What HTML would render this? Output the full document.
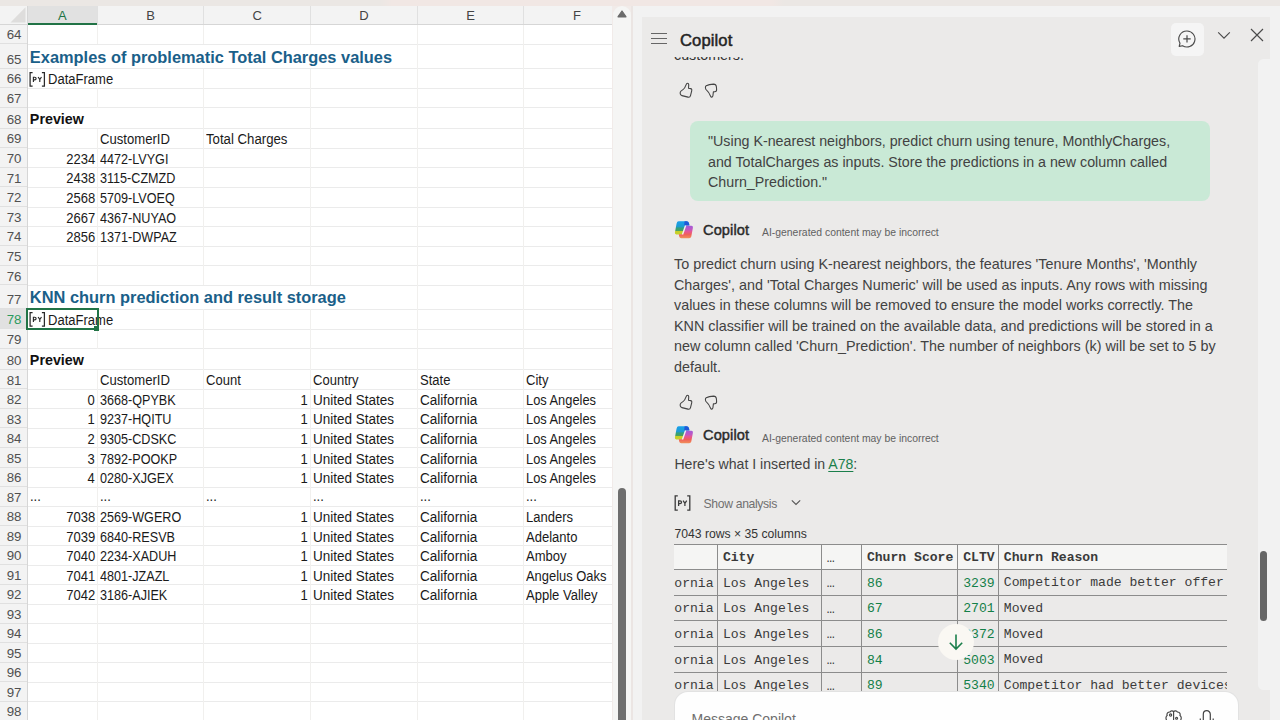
<!DOCTYPE html>
<html><head><meta charset="utf-8"><title>Excel Copilot</title>
<style>
html,body{margin:0;padding:0;width:1280px;height:720px;overflow:hidden;background:#f2f2f2;}
body{position:relative;font-family:'Liberation Sans', sans-serif;}
.r{position:absolute;box-sizing:border-box;}
.t{position:absolute;white-space:nowrap;line-height:1;}
</style></head><body>
<div class="r" style="left:0;top:0;width:1280px;height:5.5px;background:linear-gradient(90deg,#ebe7e4 0px,#ebe7e4 380px,#f1e7e4 392px,#f1e7e4 772px,#ebe7e4 784px,#ebe7e4 1280px)"></div>
<div class="r" style="left:0.00px;top:5.50px;width:612.00px;height:714.50px;background:#ffffff;"></div>
<div class="r" style="left:27.25px;top:43.50px;width:584.75px;height:1.00px;background:#ebebeb;"></div>
<div class="r" style="left:27.25px;top:68.00px;width:584.75px;height:1.00px;background:#ebebeb;"></div>
<div class="r" style="left:27.25px;top:87.50px;width:584.75px;height:1.00px;background:#ebebeb;"></div>
<div class="r" style="left:27.25px;top:107.00px;width:584.75px;height:1.00px;background:#ebebeb;"></div>
<div class="r" style="left:27.25px;top:128.25px;width:584.75px;height:1.00px;background:#ebebeb;"></div>
<div class="r" style="left:27.25px;top:147.50px;width:584.75px;height:1.00px;background:#ebebeb;"></div>
<div class="r" style="left:27.25px;top:167.00px;width:584.75px;height:1.00px;background:#ebebeb;"></div>
<div class="r" style="left:27.25px;top:186.75px;width:584.75px;height:1.00px;background:#ebebeb;"></div>
<div class="r" style="left:27.25px;top:206.50px;width:584.75px;height:1.00px;background:#ebebeb;"></div>
<div class="r" style="left:27.25px;top:226.00px;width:584.75px;height:1.00px;background:#ebebeb;"></div>
<div class="r" style="left:27.25px;top:245.50px;width:584.75px;height:1.00px;background:#ebebeb;"></div>
<div class="r" style="left:27.25px;top:265.00px;width:584.75px;height:1.00px;background:#ebebeb;"></div>
<div class="r" style="left:27.25px;top:284.75px;width:584.75px;height:1.00px;background:#ebebeb;"></div>
<div class="r" style="left:27.25px;top:308.50px;width:584.75px;height:1.00px;background:#ebebeb;"></div>
<div class="r" style="left:27.25px;top:328.50px;width:584.75px;height:1.00px;background:#ebebeb;"></div>
<div class="r" style="left:27.25px;top:348.00px;width:584.75px;height:1.00px;background:#ebebeb;"></div>
<div class="r" style="left:27.25px;top:369.00px;width:584.75px;height:1.00px;background:#ebebeb;"></div>
<div class="r" style="left:27.25px;top:388.75px;width:584.75px;height:1.00px;background:#ebebeb;"></div>
<div class="r" style="left:27.25px;top:408.25px;width:584.75px;height:1.00px;background:#ebebeb;"></div>
<div class="r" style="left:27.25px;top:427.75px;width:584.75px;height:1.00px;background:#ebebeb;"></div>
<div class="r" style="left:27.25px;top:447.25px;width:584.75px;height:1.00px;background:#ebebeb;"></div>
<div class="r" style="left:27.25px;top:467.00px;width:584.75px;height:1.00px;background:#ebebeb;"></div>
<div class="r" style="left:27.25px;top:486.50px;width:584.75px;height:1.00px;background:#ebebeb;"></div>
<div class="r" style="left:27.25px;top:506.00px;width:584.75px;height:1.00px;background:#ebebeb;"></div>
<div class="r" style="left:27.25px;top:525.50px;width:584.75px;height:1.00px;background:#ebebeb;"></div>
<div class="r" style="left:27.25px;top:545.00px;width:584.75px;height:1.00px;background:#ebebeb;"></div>
<div class="r" style="left:27.25px;top:564.50px;width:584.75px;height:1.00px;background:#ebebeb;"></div>
<div class="r" style="left:27.25px;top:584.00px;width:584.75px;height:1.00px;background:#ebebeb;"></div>
<div class="r" style="left:27.25px;top:603.50px;width:584.75px;height:1.00px;background:#ebebeb;"></div>
<div class="r" style="left:27.25px;top:623.00px;width:584.75px;height:1.00px;background:#ebebeb;"></div>
<div class="r" style="left:27.25px;top:642.50px;width:584.75px;height:1.00px;background:#ebebeb;"></div>
<div class="r" style="left:27.25px;top:662.00px;width:584.75px;height:1.00px;background:#ebebeb;"></div>
<div class="r" style="left:27.25px;top:681.50px;width:584.75px;height:1.00px;background:#ebebeb;"></div>
<div class="r" style="left:27.25px;top:701.00px;width:584.75px;height:1.00px;background:#ebebeb;"></div>
<div class="r" style="left:27.25px;top:720.50px;width:584.75px;height:1.00px;background:#ebebeb;"></div>
<div class="r" style="left:96.75px;top:24.00px;width:1.00px;height:20.00px;background:#f1f0ee;"></div>
<div class="r" style="left:203.25px;top:24.00px;width:1.00px;height:20.00px;background:#f1f0ee;"></div>
<div class="r" style="left:310.00px;top:24.00px;width:1.00px;height:20.00px;background:#f1f0ee;"></div>
<div class="r" style="left:417.00px;top:24.00px;width:1.00px;height:20.00px;background:#f1f0ee;"></div>
<div class="r" style="left:523.25px;top:24.00px;width:1.00px;height:20.00px;background:#f1f0ee;"></div>
<div class="r" style="left:417.00px;top:44.00px;width:1.00px;height:24.50px;background:#f1f0ee;"></div>
<div class="r" style="left:523.25px;top:44.00px;width:1.00px;height:24.50px;background:#f1f0ee;"></div>
<div class="r" style="left:203.25px;top:68.50px;width:1.00px;height:19.50px;background:#f1f0ee;"></div>
<div class="r" style="left:310.00px;top:68.50px;width:1.00px;height:19.50px;background:#f1f0ee;"></div>
<div class="r" style="left:417.00px;top:68.50px;width:1.00px;height:19.50px;background:#f1f0ee;"></div>
<div class="r" style="left:523.25px;top:68.50px;width:1.00px;height:19.50px;background:#f1f0ee;"></div>
<div class="r" style="left:96.75px;top:88.00px;width:1.00px;height:19.50px;background:#f1f0ee;"></div>
<div class="r" style="left:203.25px;top:88.00px;width:1.00px;height:19.50px;background:#f1f0ee;"></div>
<div class="r" style="left:310.00px;top:88.00px;width:1.00px;height:19.50px;background:#f1f0ee;"></div>
<div class="r" style="left:417.00px;top:88.00px;width:1.00px;height:19.50px;background:#f1f0ee;"></div>
<div class="r" style="left:523.25px;top:88.00px;width:1.00px;height:19.50px;background:#f1f0ee;"></div>
<div class="r" style="left:203.25px;top:107.50px;width:1.00px;height:21.25px;background:#f1f0ee;"></div>
<div class="r" style="left:310.00px;top:107.50px;width:1.00px;height:21.25px;background:#f1f0ee;"></div>
<div class="r" style="left:417.00px;top:107.50px;width:1.00px;height:21.25px;background:#f1f0ee;"></div>
<div class="r" style="left:523.25px;top:107.50px;width:1.00px;height:21.25px;background:#f1f0ee;"></div>
<div class="r" style="left:96.75px;top:128.75px;width:1.00px;height:19.25px;background:#f1f0ee;"></div>
<div class="r" style="left:203.25px;top:128.75px;width:1.00px;height:19.25px;background:#f1f0ee;"></div>
<div class="r" style="left:310.00px;top:128.75px;width:1.00px;height:19.25px;background:#f1f0ee;"></div>
<div class="r" style="left:417.00px;top:128.75px;width:1.00px;height:19.25px;background:#f1f0ee;"></div>
<div class="r" style="left:523.25px;top:128.75px;width:1.00px;height:19.25px;background:#f1f0ee;"></div>
<div class="r" style="left:96.75px;top:148.00px;width:1.00px;height:19.50px;background:#f1f0ee;"></div>
<div class="r" style="left:203.25px;top:148.00px;width:1.00px;height:19.50px;background:#f1f0ee;"></div>
<div class="r" style="left:310.00px;top:148.00px;width:1.00px;height:19.50px;background:#f1f0ee;"></div>
<div class="r" style="left:417.00px;top:148.00px;width:1.00px;height:19.50px;background:#f1f0ee;"></div>
<div class="r" style="left:523.25px;top:148.00px;width:1.00px;height:19.50px;background:#f1f0ee;"></div>
<div class="r" style="left:96.75px;top:167.50px;width:1.00px;height:19.75px;background:#f1f0ee;"></div>
<div class="r" style="left:203.25px;top:167.50px;width:1.00px;height:19.75px;background:#f1f0ee;"></div>
<div class="r" style="left:310.00px;top:167.50px;width:1.00px;height:19.75px;background:#f1f0ee;"></div>
<div class="r" style="left:417.00px;top:167.50px;width:1.00px;height:19.75px;background:#f1f0ee;"></div>
<div class="r" style="left:523.25px;top:167.50px;width:1.00px;height:19.75px;background:#f1f0ee;"></div>
<div class="r" style="left:96.75px;top:187.25px;width:1.00px;height:19.75px;background:#f1f0ee;"></div>
<div class="r" style="left:203.25px;top:187.25px;width:1.00px;height:19.75px;background:#f1f0ee;"></div>
<div class="r" style="left:310.00px;top:187.25px;width:1.00px;height:19.75px;background:#f1f0ee;"></div>
<div class="r" style="left:417.00px;top:187.25px;width:1.00px;height:19.75px;background:#f1f0ee;"></div>
<div class="r" style="left:523.25px;top:187.25px;width:1.00px;height:19.75px;background:#f1f0ee;"></div>
<div class="r" style="left:96.75px;top:207.00px;width:1.00px;height:19.50px;background:#f1f0ee;"></div>
<div class="r" style="left:203.25px;top:207.00px;width:1.00px;height:19.50px;background:#f1f0ee;"></div>
<div class="r" style="left:310.00px;top:207.00px;width:1.00px;height:19.50px;background:#f1f0ee;"></div>
<div class="r" style="left:417.00px;top:207.00px;width:1.00px;height:19.50px;background:#f1f0ee;"></div>
<div class="r" style="left:523.25px;top:207.00px;width:1.00px;height:19.50px;background:#f1f0ee;"></div>
<div class="r" style="left:96.75px;top:226.50px;width:1.00px;height:19.50px;background:#f1f0ee;"></div>
<div class="r" style="left:203.25px;top:226.50px;width:1.00px;height:19.50px;background:#f1f0ee;"></div>
<div class="r" style="left:310.00px;top:226.50px;width:1.00px;height:19.50px;background:#f1f0ee;"></div>
<div class="r" style="left:417.00px;top:226.50px;width:1.00px;height:19.50px;background:#f1f0ee;"></div>
<div class="r" style="left:523.25px;top:226.50px;width:1.00px;height:19.50px;background:#f1f0ee;"></div>
<div class="r" style="left:96.75px;top:246.00px;width:1.00px;height:19.50px;background:#f1f0ee;"></div>
<div class="r" style="left:203.25px;top:246.00px;width:1.00px;height:19.50px;background:#f1f0ee;"></div>
<div class="r" style="left:310.00px;top:246.00px;width:1.00px;height:19.50px;background:#f1f0ee;"></div>
<div class="r" style="left:417.00px;top:246.00px;width:1.00px;height:19.50px;background:#f1f0ee;"></div>
<div class="r" style="left:523.25px;top:246.00px;width:1.00px;height:19.50px;background:#f1f0ee;"></div>
<div class="r" style="left:96.75px;top:265.50px;width:1.00px;height:19.75px;background:#f1f0ee;"></div>
<div class="r" style="left:203.25px;top:265.50px;width:1.00px;height:19.75px;background:#f1f0ee;"></div>
<div class="r" style="left:310.00px;top:265.50px;width:1.00px;height:19.75px;background:#f1f0ee;"></div>
<div class="r" style="left:417.00px;top:265.50px;width:1.00px;height:19.75px;background:#f1f0ee;"></div>
<div class="r" style="left:523.25px;top:265.50px;width:1.00px;height:19.75px;background:#f1f0ee;"></div>
<div class="r" style="left:417.00px;top:285.25px;width:1.00px;height:23.75px;background:#f1f0ee;"></div>
<div class="r" style="left:523.25px;top:285.25px;width:1.00px;height:23.75px;background:#f1f0ee;"></div>
<div class="r" style="left:203.25px;top:309.00px;width:1.00px;height:20.00px;background:#f1f0ee;"></div>
<div class="r" style="left:310.00px;top:309.00px;width:1.00px;height:20.00px;background:#f1f0ee;"></div>
<div class="r" style="left:417.00px;top:309.00px;width:1.00px;height:20.00px;background:#f1f0ee;"></div>
<div class="r" style="left:523.25px;top:309.00px;width:1.00px;height:20.00px;background:#f1f0ee;"></div>
<div class="r" style="left:96.75px;top:329.00px;width:1.00px;height:19.50px;background:#f1f0ee;"></div>
<div class="r" style="left:203.25px;top:329.00px;width:1.00px;height:19.50px;background:#f1f0ee;"></div>
<div class="r" style="left:310.00px;top:329.00px;width:1.00px;height:19.50px;background:#f1f0ee;"></div>
<div class="r" style="left:417.00px;top:329.00px;width:1.00px;height:19.50px;background:#f1f0ee;"></div>
<div class="r" style="left:523.25px;top:329.00px;width:1.00px;height:19.50px;background:#f1f0ee;"></div>
<div class="r" style="left:203.25px;top:348.50px;width:1.00px;height:21.00px;background:#f1f0ee;"></div>
<div class="r" style="left:310.00px;top:348.50px;width:1.00px;height:21.00px;background:#f1f0ee;"></div>
<div class="r" style="left:417.00px;top:348.50px;width:1.00px;height:21.00px;background:#f1f0ee;"></div>
<div class="r" style="left:523.25px;top:348.50px;width:1.00px;height:21.00px;background:#f1f0ee;"></div>
<div class="r" style="left:96.75px;top:369.50px;width:1.00px;height:19.75px;background:#f1f0ee;"></div>
<div class="r" style="left:203.25px;top:369.50px;width:1.00px;height:19.75px;background:#f1f0ee;"></div>
<div class="r" style="left:310.00px;top:369.50px;width:1.00px;height:19.75px;background:#f1f0ee;"></div>
<div class="r" style="left:417.00px;top:369.50px;width:1.00px;height:19.75px;background:#f1f0ee;"></div>
<div class="r" style="left:523.25px;top:369.50px;width:1.00px;height:19.75px;background:#f1f0ee;"></div>
<div class="r" style="left:96.75px;top:389.25px;width:1.00px;height:19.50px;background:#f1f0ee;"></div>
<div class="r" style="left:203.25px;top:389.25px;width:1.00px;height:19.50px;background:#f1f0ee;"></div>
<div class="r" style="left:310.00px;top:389.25px;width:1.00px;height:19.50px;background:#f1f0ee;"></div>
<div class="r" style="left:417.00px;top:389.25px;width:1.00px;height:19.50px;background:#f1f0ee;"></div>
<div class="r" style="left:523.25px;top:389.25px;width:1.00px;height:19.50px;background:#f1f0ee;"></div>
<div class="r" style="left:96.75px;top:408.75px;width:1.00px;height:19.50px;background:#f1f0ee;"></div>
<div class="r" style="left:203.25px;top:408.75px;width:1.00px;height:19.50px;background:#f1f0ee;"></div>
<div class="r" style="left:310.00px;top:408.75px;width:1.00px;height:19.50px;background:#f1f0ee;"></div>
<div class="r" style="left:417.00px;top:408.75px;width:1.00px;height:19.50px;background:#f1f0ee;"></div>
<div class="r" style="left:523.25px;top:408.75px;width:1.00px;height:19.50px;background:#f1f0ee;"></div>
<div class="r" style="left:96.75px;top:428.25px;width:1.00px;height:19.50px;background:#f1f0ee;"></div>
<div class="r" style="left:203.25px;top:428.25px;width:1.00px;height:19.50px;background:#f1f0ee;"></div>
<div class="r" style="left:310.00px;top:428.25px;width:1.00px;height:19.50px;background:#f1f0ee;"></div>
<div class="r" style="left:417.00px;top:428.25px;width:1.00px;height:19.50px;background:#f1f0ee;"></div>
<div class="r" style="left:523.25px;top:428.25px;width:1.00px;height:19.50px;background:#f1f0ee;"></div>
<div class="r" style="left:96.75px;top:447.75px;width:1.00px;height:19.75px;background:#f1f0ee;"></div>
<div class="r" style="left:203.25px;top:447.75px;width:1.00px;height:19.75px;background:#f1f0ee;"></div>
<div class="r" style="left:310.00px;top:447.75px;width:1.00px;height:19.75px;background:#f1f0ee;"></div>
<div class="r" style="left:417.00px;top:447.75px;width:1.00px;height:19.75px;background:#f1f0ee;"></div>
<div class="r" style="left:523.25px;top:447.75px;width:1.00px;height:19.75px;background:#f1f0ee;"></div>
<div class="r" style="left:96.75px;top:467.50px;width:1.00px;height:19.50px;background:#f1f0ee;"></div>
<div class="r" style="left:203.25px;top:467.50px;width:1.00px;height:19.50px;background:#f1f0ee;"></div>
<div class="r" style="left:310.00px;top:467.50px;width:1.00px;height:19.50px;background:#f1f0ee;"></div>
<div class="r" style="left:417.00px;top:467.50px;width:1.00px;height:19.50px;background:#f1f0ee;"></div>
<div class="r" style="left:523.25px;top:467.50px;width:1.00px;height:19.50px;background:#f1f0ee;"></div>
<div class="r" style="left:96.75px;top:487.00px;width:1.00px;height:19.50px;background:#f1f0ee;"></div>
<div class="r" style="left:203.25px;top:487.00px;width:1.00px;height:19.50px;background:#f1f0ee;"></div>
<div class="r" style="left:310.00px;top:487.00px;width:1.00px;height:19.50px;background:#f1f0ee;"></div>
<div class="r" style="left:417.00px;top:487.00px;width:1.00px;height:19.50px;background:#f1f0ee;"></div>
<div class="r" style="left:523.25px;top:487.00px;width:1.00px;height:19.50px;background:#f1f0ee;"></div>
<div class="r" style="left:96.75px;top:506.50px;width:1.00px;height:19.50px;background:#f1f0ee;"></div>
<div class="r" style="left:203.25px;top:506.50px;width:1.00px;height:19.50px;background:#f1f0ee;"></div>
<div class="r" style="left:310.00px;top:506.50px;width:1.00px;height:19.50px;background:#f1f0ee;"></div>
<div class="r" style="left:417.00px;top:506.50px;width:1.00px;height:19.50px;background:#f1f0ee;"></div>
<div class="r" style="left:523.25px;top:506.50px;width:1.00px;height:19.50px;background:#f1f0ee;"></div>
<div class="r" style="left:96.75px;top:526.00px;width:1.00px;height:19.50px;background:#f1f0ee;"></div>
<div class="r" style="left:203.25px;top:526.00px;width:1.00px;height:19.50px;background:#f1f0ee;"></div>
<div class="r" style="left:310.00px;top:526.00px;width:1.00px;height:19.50px;background:#f1f0ee;"></div>
<div class="r" style="left:417.00px;top:526.00px;width:1.00px;height:19.50px;background:#f1f0ee;"></div>
<div class="r" style="left:523.25px;top:526.00px;width:1.00px;height:19.50px;background:#f1f0ee;"></div>
<div class="r" style="left:96.75px;top:545.50px;width:1.00px;height:19.50px;background:#f1f0ee;"></div>
<div class="r" style="left:203.25px;top:545.50px;width:1.00px;height:19.50px;background:#f1f0ee;"></div>
<div class="r" style="left:310.00px;top:545.50px;width:1.00px;height:19.50px;background:#f1f0ee;"></div>
<div class="r" style="left:417.00px;top:545.50px;width:1.00px;height:19.50px;background:#f1f0ee;"></div>
<div class="r" style="left:523.25px;top:545.50px;width:1.00px;height:19.50px;background:#f1f0ee;"></div>
<div class="r" style="left:96.75px;top:565.00px;width:1.00px;height:19.50px;background:#f1f0ee;"></div>
<div class="r" style="left:203.25px;top:565.00px;width:1.00px;height:19.50px;background:#f1f0ee;"></div>
<div class="r" style="left:310.00px;top:565.00px;width:1.00px;height:19.50px;background:#f1f0ee;"></div>
<div class="r" style="left:417.00px;top:565.00px;width:1.00px;height:19.50px;background:#f1f0ee;"></div>
<div class="r" style="left:523.25px;top:565.00px;width:1.00px;height:19.50px;background:#f1f0ee;"></div>
<div class="r" style="left:96.75px;top:584.50px;width:1.00px;height:19.50px;background:#f1f0ee;"></div>
<div class="r" style="left:203.25px;top:584.50px;width:1.00px;height:19.50px;background:#f1f0ee;"></div>
<div class="r" style="left:310.00px;top:584.50px;width:1.00px;height:19.50px;background:#f1f0ee;"></div>
<div class="r" style="left:417.00px;top:584.50px;width:1.00px;height:19.50px;background:#f1f0ee;"></div>
<div class="r" style="left:523.25px;top:584.50px;width:1.00px;height:19.50px;background:#f1f0ee;"></div>
<div class="r" style="left:96.75px;top:604.00px;width:1.00px;height:19.50px;background:#f1f0ee;"></div>
<div class="r" style="left:203.25px;top:604.00px;width:1.00px;height:19.50px;background:#f1f0ee;"></div>
<div class="r" style="left:310.00px;top:604.00px;width:1.00px;height:19.50px;background:#f1f0ee;"></div>
<div class="r" style="left:417.00px;top:604.00px;width:1.00px;height:19.50px;background:#f1f0ee;"></div>
<div class="r" style="left:523.25px;top:604.00px;width:1.00px;height:19.50px;background:#f1f0ee;"></div>
<div class="r" style="left:96.75px;top:623.50px;width:1.00px;height:19.50px;background:#f1f0ee;"></div>
<div class="r" style="left:203.25px;top:623.50px;width:1.00px;height:19.50px;background:#f1f0ee;"></div>
<div class="r" style="left:310.00px;top:623.50px;width:1.00px;height:19.50px;background:#f1f0ee;"></div>
<div class="r" style="left:417.00px;top:623.50px;width:1.00px;height:19.50px;background:#f1f0ee;"></div>
<div class="r" style="left:523.25px;top:623.50px;width:1.00px;height:19.50px;background:#f1f0ee;"></div>
<div class="r" style="left:96.75px;top:643.00px;width:1.00px;height:19.50px;background:#f1f0ee;"></div>
<div class="r" style="left:203.25px;top:643.00px;width:1.00px;height:19.50px;background:#f1f0ee;"></div>
<div class="r" style="left:310.00px;top:643.00px;width:1.00px;height:19.50px;background:#f1f0ee;"></div>
<div class="r" style="left:417.00px;top:643.00px;width:1.00px;height:19.50px;background:#f1f0ee;"></div>
<div class="r" style="left:523.25px;top:643.00px;width:1.00px;height:19.50px;background:#f1f0ee;"></div>
<div class="r" style="left:96.75px;top:662.50px;width:1.00px;height:19.50px;background:#f1f0ee;"></div>
<div class="r" style="left:203.25px;top:662.50px;width:1.00px;height:19.50px;background:#f1f0ee;"></div>
<div class="r" style="left:310.00px;top:662.50px;width:1.00px;height:19.50px;background:#f1f0ee;"></div>
<div class="r" style="left:417.00px;top:662.50px;width:1.00px;height:19.50px;background:#f1f0ee;"></div>
<div class="r" style="left:523.25px;top:662.50px;width:1.00px;height:19.50px;background:#f1f0ee;"></div>
<div class="r" style="left:96.75px;top:682.00px;width:1.00px;height:19.50px;background:#f1f0ee;"></div>
<div class="r" style="left:203.25px;top:682.00px;width:1.00px;height:19.50px;background:#f1f0ee;"></div>
<div class="r" style="left:310.00px;top:682.00px;width:1.00px;height:19.50px;background:#f1f0ee;"></div>
<div class="r" style="left:417.00px;top:682.00px;width:1.00px;height:19.50px;background:#f1f0ee;"></div>
<div class="r" style="left:523.25px;top:682.00px;width:1.00px;height:19.50px;background:#f1f0ee;"></div>
<div class="r" style="left:96.75px;top:701.50px;width:1.00px;height:19.50px;background:#f1f0ee;"></div>
<div class="r" style="left:203.25px;top:701.50px;width:1.00px;height:19.50px;background:#f1f0ee;"></div>
<div class="r" style="left:310.00px;top:701.50px;width:1.00px;height:19.50px;background:#f1f0ee;"></div>
<div class="r" style="left:417.00px;top:701.50px;width:1.00px;height:19.50px;background:#f1f0ee;"></div>
<div class="r" style="left:523.25px;top:701.50px;width:1.00px;height:19.50px;background:#f1f0ee;"></div>
<div class="r" style="left:0.00px;top:5.50px;width:612.00px;height:18.50px;background:#f3f3f3;"></div>
<div class="r" style="left:27.25px;top:5.50px;width:70.00px;height:18.50px;background:#e1e1e1;"></div>
<div class="r" style="left:0.00px;top:23.50px;width:612.00px;height:1.00px;background:#d6d6d6;"></div>
<div class="r" style="left:27.25px;top:22.75px;width:70.00px;height:2.00px;background:#217346;"></div>
<div class="r" style="left:96.75px;top:5.50px;width:1.00px;height:18.00px;background:#e0e0e0;"></div>
<div class="r" style="left:203.25px;top:5.50px;width:1.00px;height:18.00px;background:#e0e0e0;"></div>
<div class="r" style="left:310.00px;top:5.50px;width:1.00px;height:18.00px;background:#e0e0e0;"></div>
<div class="r" style="left:417.00px;top:5.50px;width:1.00px;height:18.00px;background:#e0e0e0;"></div>
<div class="r" style="left:523.25px;top:5.50px;width:1.00px;height:18.00px;background:#e0e0e0;"></div>
<svg class="r" style="left:0;top:5.5px" width="27" height="19"><polygon points="10.5,16.5 25.5,1.2 25.5,16.5" fill="#dedddc"/></svg>
<div class="t" style="left:42.25px;width:40px;text-align:center;top:8.75px;font-size:13px;color:#217346">A</div>
<div class="t" style="left:130.50px;width:40px;text-align:center;top:8.75px;font-size:13px;color:#444">B</div>
<div class="t" style="left:237.12px;width:40px;text-align:center;top:8.75px;font-size:13px;color:#444">C</div>
<div class="t" style="left:344.00px;width:40px;text-align:center;top:8.75px;font-size:13px;color:#444">D</div>
<div class="t" style="left:450.62px;width:40px;text-align:center;top:8.75px;font-size:13px;color:#444">E</div>
<div class="t" style="left:557.00px;width:40px;text-align:center;top:8.75px;font-size:13px;color:#444">F</div>
<div class="r" style="left:0.00px;top:24.50px;width:27.25px;height:695.50px;background:#f3f3f3;"></div>
<div class="r" style="left:26.50px;top:5.50px;width:1.00px;height:714.50px;background:#d6d6d6;"></div>
<div class="r" style="left:0.00px;top:43.00px;width:26.50px;height:1.00px;background:#e0e0e0;"></div>
<div class="r" style="left:0.00px;top:67.50px;width:26.50px;height:1.00px;background:#e0e0e0;"></div>
<div class="r" style="left:0.00px;top:87.00px;width:26.50px;height:1.00px;background:#e0e0e0;"></div>
<div class="r" style="left:0.00px;top:106.50px;width:26.50px;height:1.00px;background:#e0e0e0;"></div>
<div class="r" style="left:0.00px;top:127.75px;width:26.50px;height:1.00px;background:#e0e0e0;"></div>
<div class="r" style="left:0.00px;top:147.00px;width:26.50px;height:1.00px;background:#e0e0e0;"></div>
<div class="r" style="left:0.00px;top:166.50px;width:26.50px;height:1.00px;background:#e0e0e0;"></div>
<div class="r" style="left:0.00px;top:186.25px;width:26.50px;height:1.00px;background:#e0e0e0;"></div>
<div class="r" style="left:0.00px;top:206.00px;width:26.50px;height:1.00px;background:#e0e0e0;"></div>
<div class="r" style="left:0.00px;top:225.50px;width:26.50px;height:1.00px;background:#e0e0e0;"></div>
<div class="r" style="left:0.00px;top:245.00px;width:26.50px;height:1.00px;background:#e0e0e0;"></div>
<div class="r" style="left:0.00px;top:264.50px;width:26.50px;height:1.00px;background:#e0e0e0;"></div>
<div class="r" style="left:0.00px;top:284.25px;width:26.50px;height:1.00px;background:#e0e0e0;"></div>
<div class="r" style="left:0.00px;top:308.00px;width:26.50px;height:1.00px;background:#e0e0e0;"></div>
<div class="r" style="left:0.00px;top:328.00px;width:26.50px;height:1.00px;background:#e0e0e0;"></div>
<div class="r" style="left:0.00px;top:347.50px;width:26.50px;height:1.00px;background:#e0e0e0;"></div>
<div class="r" style="left:0.00px;top:368.50px;width:26.50px;height:1.00px;background:#e0e0e0;"></div>
<div class="r" style="left:0.00px;top:388.25px;width:26.50px;height:1.00px;background:#e0e0e0;"></div>
<div class="r" style="left:0.00px;top:407.75px;width:26.50px;height:1.00px;background:#e0e0e0;"></div>
<div class="r" style="left:0.00px;top:427.25px;width:26.50px;height:1.00px;background:#e0e0e0;"></div>
<div class="r" style="left:0.00px;top:446.75px;width:26.50px;height:1.00px;background:#e0e0e0;"></div>
<div class="r" style="left:0.00px;top:466.50px;width:26.50px;height:1.00px;background:#e0e0e0;"></div>
<div class="r" style="left:0.00px;top:486.00px;width:26.50px;height:1.00px;background:#e0e0e0;"></div>
<div class="r" style="left:0.00px;top:505.50px;width:26.50px;height:1.00px;background:#e0e0e0;"></div>
<div class="r" style="left:0.00px;top:525.00px;width:26.50px;height:1.00px;background:#e0e0e0;"></div>
<div class="r" style="left:0.00px;top:544.50px;width:26.50px;height:1.00px;background:#e0e0e0;"></div>
<div class="r" style="left:0.00px;top:564.00px;width:26.50px;height:1.00px;background:#e0e0e0;"></div>
<div class="r" style="left:0.00px;top:583.50px;width:26.50px;height:1.00px;background:#e0e0e0;"></div>
<div class="r" style="left:0.00px;top:603.00px;width:26.50px;height:1.00px;background:#e0e0e0;"></div>
<div class="r" style="left:0.00px;top:622.50px;width:26.50px;height:1.00px;background:#e0e0e0;"></div>
<div class="r" style="left:0.00px;top:642.00px;width:26.50px;height:1.00px;background:#e0e0e0;"></div>
<div class="r" style="left:0.00px;top:661.50px;width:26.50px;height:1.00px;background:#e0e0e0;"></div>
<div class="r" style="left:0.00px;top:681.00px;width:26.50px;height:1.00px;background:#e0e0e0;"></div>
<div class="r" style="left:0.00px;top:700.50px;width:26.50px;height:1.00px;background:#e0e0e0;"></div>
<div class="r" style="left:0.00px;top:720.00px;width:26.50px;height:1.00px;background:#e0e0e0;"></div>
<div class="r" style="left:0.00px;top:309.00px;width:26.50px;height:19.00px;background:#e1e1e1;"></div>
<div class="t" style="right:1258.50px;top:28.40px;font-size:13.3px;color:#505050">64</div>
<div class="t" style="right:1258.50px;top:52.90px;font-size:13.3px;color:#505050">65</div>
<div class="t" style="right:1258.50px;top:72.40px;font-size:13.3px;color:#505050">66</div>
<div class="t" style="right:1258.50px;top:91.90px;font-size:13.3px;color:#505050">67</div>
<div class="t" style="right:1258.50px;top:113.15px;font-size:13.3px;color:#505050">68</div>
<div class="t" style="right:1258.50px;top:132.39px;font-size:13.3px;color:#505050">69</div>
<div class="t" style="right:1258.50px;top:151.89px;font-size:13.3px;color:#505050">70</div>
<div class="t" style="right:1258.50px;top:171.64px;font-size:13.3px;color:#505050">71</div>
<div class="t" style="right:1258.50px;top:191.39px;font-size:13.3px;color:#505050">72</div>
<div class="t" style="right:1258.50px;top:210.89px;font-size:13.3px;color:#505050">73</div>
<div class="t" style="right:1258.50px;top:230.39px;font-size:13.3px;color:#505050">74</div>
<div class="t" style="right:1258.50px;top:249.89px;font-size:13.3px;color:#505050">75</div>
<div class="t" style="right:1258.50px;top:269.64px;font-size:13.3px;color:#505050">76</div>
<div class="t" style="right:1258.50px;top:293.39px;font-size:13.3px;color:#505050">77</div>
<div class="t" style="right:1258.50px;top:313.39px;font-size:13.3px;color:#2a9a5e">78</div>
<div class="t" style="right:1258.50px;top:332.89px;font-size:13.3px;color:#505050">79</div>
<div class="t" style="right:1258.50px;top:353.89px;font-size:13.3px;color:#505050">80</div>
<div class="t" style="right:1258.50px;top:373.64px;font-size:13.3px;color:#505050">81</div>
<div class="t" style="right:1258.50px;top:393.14px;font-size:13.3px;color:#505050">82</div>
<div class="t" style="right:1258.50px;top:412.64px;font-size:13.3px;color:#505050">83</div>
<div class="t" style="right:1258.50px;top:432.14px;font-size:13.3px;color:#505050">84</div>
<div class="t" style="right:1258.50px;top:451.89px;font-size:13.3px;color:#505050">85</div>
<div class="t" style="right:1258.50px;top:471.39px;font-size:13.3px;color:#505050">86</div>
<div class="t" style="right:1258.50px;top:490.89px;font-size:13.3px;color:#505050">87</div>
<div class="t" style="right:1258.50px;top:510.40px;font-size:13.3px;color:#505050">88</div>
<div class="t" style="right:1258.50px;top:529.90px;font-size:13.3px;color:#505050">89</div>
<div class="t" style="right:1258.50px;top:549.40px;font-size:13.3px;color:#505050">90</div>
<div class="t" style="right:1258.50px;top:568.90px;font-size:13.3px;color:#505050">91</div>
<div class="t" style="right:1258.50px;top:588.40px;font-size:13.3px;color:#505050">92</div>
<div class="t" style="right:1258.50px;top:607.90px;font-size:13.3px;color:#505050">93</div>
<div class="t" style="right:1258.50px;top:627.40px;font-size:13.3px;color:#505050">94</div>
<div class="t" style="right:1258.50px;top:646.90px;font-size:13.3px;color:#505050">95</div>
<div class="t" style="right:1258.50px;top:666.40px;font-size:13.3px;color:#505050">96</div>
<div class="t" style="right:1258.50px;top:685.90px;font-size:13.3px;color:#505050">97</div>
<div class="t" style="right:1258.50px;top:705.40px;font-size:13.3px;color:#505050">98</div>
<div class="t" style="left:29.85px;top:49.00px;font-size:16.4px;color:#1a6089;font-weight:bold;font-family:'Liberation Sans', sans-serif;">Examples of problematic Total Charges values</div>
<div class="r" style="left:29px;top:71.80px;width:17px;height:15px"><svg width="17" height="15" viewBox="0 0 17 15" style="position:absolute;left:0;top:0"><path d="M3.6 0.6 H1.1 V14 H3.6 M12.9 0.6 H15.4 V14 H12.9" fill="none" stroke="#2a2a2a" stroke-width="1.25"/><path d="M4.4 9.9 V5.2 H5.7 Q7.1 5.2 7.1 6.5 Q7.1 7.8 5.7 7.8 H4.4 M9.1 5.0 L10.8 7.4 L12.5 5.0 M10.8 7.4 V9.9" fill="none" stroke="#2a2a2a" stroke-width="1.15"/></svg></div>
<div class="t" style="left:47.90px;top:72.00px;font-size:14px;color:#1a1a1a;font-weight:normal;font-family:'Liberation Sans', sans-serif;transform:scaleX(0.93);transform-origin:left top;">DataFrame</div>
<div class="t" style="left:29.85px;top:112.00px;font-size:14.3px;color:#111;font-weight:bold;font-family:'Liberation Sans', sans-serif;">Preview</div>
<div class="t" style="left:99.85px;top:132.00px;font-size:14px;color:#1a1a1a;font-weight:normal;font-family:'Liberation Sans', sans-serif;transform:scaleX(0.937);transform-origin:left top;">CustomerID</div>
<div class="t" style="left:206.35px;top:132.00px;font-size:14px;color:#1a1a1a;font-weight:normal;font-family:'Liberation Sans', sans-serif;transform:scaleX(0.943);transform-origin:left top;">Total Charges</div>
<div class="t" style="right:1185.15px;top:152.00px;font-size:14px;color:#1a1a1a;font-weight:normal;font-family:'Liberation Sans', sans-serif;transform:scaleX(0.93);transform-origin:right top;">2234</div>
<div class="t" style="left:99.85px;top:152.00px;font-size:14px;color:#1a1a1a;font-weight:normal;font-family:'Liberation Sans', sans-serif;transform:scaleX(0.9);transform-origin:left top;">4472-LVYGI</div>
<div class="t" style="right:1185.15px;top:171.00px;font-size:14px;color:#1a1a1a;font-weight:normal;font-family:'Liberation Sans', sans-serif;transform:scaleX(0.93);transform-origin:right top;">2438</div>
<div class="t" style="left:99.85px;top:171.00px;font-size:14px;color:#1a1a1a;font-weight:normal;font-family:'Liberation Sans', sans-serif;transform:scaleX(0.9);transform-origin:left top;">3115-CZMZD</div>
<div class="t" style="right:1185.15px;top:191.00px;font-size:14px;color:#1a1a1a;font-weight:normal;font-family:'Liberation Sans', sans-serif;transform:scaleX(0.93);transform-origin:right top;">2568</div>
<div class="t" style="left:99.85px;top:191.00px;font-size:14px;color:#1a1a1a;font-weight:normal;font-family:'Liberation Sans', sans-serif;transform:scaleX(0.9);transform-origin:left top;">5709-LVOEQ</div>
<div class="t" style="right:1185.15px;top:211.00px;font-size:14px;color:#1a1a1a;font-weight:normal;font-family:'Liberation Sans', sans-serif;transform:scaleX(0.93);transform-origin:right top;">2667</div>
<div class="t" style="left:99.85px;top:211.00px;font-size:14px;color:#1a1a1a;font-weight:normal;font-family:'Liberation Sans', sans-serif;transform:scaleX(0.9);transform-origin:left top;">4367-NUYAO</div>
<div class="t" style="right:1185.15px;top:230.00px;font-size:14px;color:#1a1a1a;font-weight:normal;font-family:'Liberation Sans', sans-serif;transform:scaleX(0.93);transform-origin:right top;">2856</div>
<div class="t" style="left:99.85px;top:230.00px;font-size:14px;color:#1a1a1a;font-weight:normal;font-family:'Liberation Sans', sans-serif;transform:scaleX(0.9);transform-origin:left top;">1371-DWPAZ</div>
<div class="t" style="left:29.85px;top:289.00px;font-size:16.4px;color:#1a6089;font-weight:bold;font-family:'Liberation Sans', sans-serif;">KNN churn prediction and result storage</div>
<div class="r" style="left:29px;top:312.30px;width:17px;height:15px"><svg width="17" height="15" viewBox="0 0 17 15" style="position:absolute;left:0;top:0"><path d="M3.6 0.6 H1.1 V14 H3.6 M12.9 0.6 H15.4 V14 H12.9" fill="none" stroke="#2a2a2a" stroke-width="1.25"/><path d="M4.4 9.9 V5.2 H5.7 Q7.1 5.2 7.1 6.5 Q7.1 7.8 5.7 7.8 H4.4 M9.1 5.0 L10.8 7.4 L12.5 5.0 M10.8 7.4 V9.9" fill="none" stroke="#2a2a2a" stroke-width="1.15"/></svg></div>
<div class="t" style="left:47.90px;top:313.00px;font-size:14px;color:#1a1a1a;font-weight:normal;font-family:'Liberation Sans', sans-serif;transform:scaleX(0.93);transform-origin:left top;">DataFrame</div>
<div class="t" style="left:29.85px;top:353.00px;font-size:14.3px;color:#111;font-weight:bold;font-family:'Liberation Sans', sans-serif;">Preview</div>
<div class="t" style="left:99.85px;top:373.00px;font-size:14px;color:#1a1a1a;font-weight:normal;font-family:'Liberation Sans', sans-serif;transform:scaleX(0.937);transform-origin:left top;">CustomerID</div>
<div class="t" style="left:206.35px;top:373.00px;font-size:14px;color:#1a1a1a;font-weight:normal;font-family:'Liberation Sans', sans-serif;transform:scaleX(0.93);transform-origin:left top;">Count</div>
<div class="t" style="left:313.10px;top:373.00px;font-size:14px;color:#1a1a1a;font-weight:normal;font-family:'Liberation Sans', sans-serif;transform:scaleX(0.93);transform-origin:left top;">Country</div>
<div class="t" style="left:420.10px;top:373.00px;font-size:14px;color:#1a1a1a;font-weight:normal;font-family:'Liberation Sans', sans-serif;transform:scaleX(0.93);transform-origin:left top;">State</div>
<div class="t" style="left:526.35px;top:373.00px;font-size:14px;color:#1a1a1a;font-weight:normal;font-family:'Liberation Sans', sans-serif;transform:scaleX(0.93);transform-origin:left top;">City</div>
<div class="t" style="right:1185.15px;top:393.00px;font-size:14px;color:#1a1a1a;font-weight:normal;font-family:'Liberation Sans', sans-serif;transform:scaleX(0.93);transform-origin:right top;">0</div>
<div class="t" style="left:99.85px;top:393.00px;font-size:14px;color:#1a1a1a;font-weight:normal;font-family:'Liberation Sans', sans-serif;transform:scaleX(0.9);transform-origin:left top;">3668-QPYBK</div>
<div class="t" style="right:971.90px;top:393.00px;font-size:14px;color:#1a1a1a;font-weight:normal;font-family:'Liberation Sans', sans-serif;transform:scaleX(0.93);transform-origin:right top;">1</div>
<div class="t" style="left:313.10px;top:393.00px;font-size:14px;color:#1a1a1a;font-weight:normal;font-family:'Liberation Sans', sans-serif;transform:scaleX(0.964);transform-origin:left top;">United States</div>
<div class="t" style="left:420.10px;top:393.00px;font-size:14px;color:#1a1a1a;font-weight:normal;font-family:'Liberation Sans', sans-serif;transform:scaleX(0.968);transform-origin:left top;">California</div>
<div class="t" style="left:526.35px;top:393.00px;font-size:14px;color:#1a1a1a;font-weight:normal;font-family:'Liberation Sans', sans-serif;transform:scaleX(0.917);transform-origin:left top;">Los Angeles</div>
<div class="t" style="right:1185.15px;top:412.00px;font-size:14px;color:#1a1a1a;font-weight:normal;font-family:'Liberation Sans', sans-serif;transform:scaleX(0.93);transform-origin:right top;">1</div>
<div class="t" style="left:99.85px;top:412.00px;font-size:14px;color:#1a1a1a;font-weight:normal;font-family:'Liberation Sans', sans-serif;transform:scaleX(0.9);transform-origin:left top;">9237-HQITU</div>
<div class="t" style="right:971.90px;top:412.00px;font-size:14px;color:#1a1a1a;font-weight:normal;font-family:'Liberation Sans', sans-serif;transform:scaleX(0.93);transform-origin:right top;">1</div>
<div class="t" style="left:313.10px;top:412.00px;font-size:14px;color:#1a1a1a;font-weight:normal;font-family:'Liberation Sans', sans-serif;transform:scaleX(0.964);transform-origin:left top;">United States</div>
<div class="t" style="left:420.10px;top:412.00px;font-size:14px;color:#1a1a1a;font-weight:normal;font-family:'Liberation Sans', sans-serif;transform:scaleX(0.968);transform-origin:left top;">California</div>
<div class="t" style="left:526.35px;top:412.00px;font-size:14px;color:#1a1a1a;font-weight:normal;font-family:'Liberation Sans', sans-serif;transform:scaleX(0.917);transform-origin:left top;">Los Angeles</div>
<div class="t" style="right:1185.15px;top:432.00px;font-size:14px;color:#1a1a1a;font-weight:normal;font-family:'Liberation Sans', sans-serif;transform:scaleX(0.93);transform-origin:right top;">2</div>
<div class="t" style="left:99.85px;top:432.00px;font-size:14px;color:#1a1a1a;font-weight:normal;font-family:'Liberation Sans', sans-serif;transform:scaleX(0.9);transform-origin:left top;">9305-CDSKC</div>
<div class="t" style="right:971.90px;top:432.00px;font-size:14px;color:#1a1a1a;font-weight:normal;font-family:'Liberation Sans', sans-serif;transform:scaleX(0.93);transform-origin:right top;">1</div>
<div class="t" style="left:313.10px;top:432.00px;font-size:14px;color:#1a1a1a;font-weight:normal;font-family:'Liberation Sans', sans-serif;transform:scaleX(0.964);transform-origin:left top;">United States</div>
<div class="t" style="left:420.10px;top:432.00px;font-size:14px;color:#1a1a1a;font-weight:normal;font-family:'Liberation Sans', sans-serif;transform:scaleX(0.968);transform-origin:left top;">California</div>
<div class="t" style="left:526.35px;top:432.00px;font-size:14px;color:#1a1a1a;font-weight:normal;font-family:'Liberation Sans', sans-serif;transform:scaleX(0.917);transform-origin:left top;">Los Angeles</div>
<div class="t" style="right:1185.15px;top:452.00px;font-size:14px;color:#1a1a1a;font-weight:normal;font-family:'Liberation Sans', sans-serif;transform:scaleX(0.93);transform-origin:right top;">3</div>
<div class="t" style="left:99.85px;top:452.00px;font-size:14px;color:#1a1a1a;font-weight:normal;font-family:'Liberation Sans', sans-serif;transform:scaleX(0.9);transform-origin:left top;">7892-POOKP</div>
<div class="t" style="right:971.90px;top:452.00px;font-size:14px;color:#1a1a1a;font-weight:normal;font-family:'Liberation Sans', sans-serif;transform:scaleX(0.93);transform-origin:right top;">1</div>
<div class="t" style="left:313.10px;top:452.00px;font-size:14px;color:#1a1a1a;font-weight:normal;font-family:'Liberation Sans', sans-serif;transform:scaleX(0.964);transform-origin:left top;">United States</div>
<div class="t" style="left:420.10px;top:452.00px;font-size:14px;color:#1a1a1a;font-weight:normal;font-family:'Liberation Sans', sans-serif;transform:scaleX(0.968);transform-origin:left top;">California</div>
<div class="t" style="left:526.35px;top:452.00px;font-size:14px;color:#1a1a1a;font-weight:normal;font-family:'Liberation Sans', sans-serif;transform:scaleX(0.917);transform-origin:left top;">Los Angeles</div>
<div class="t" style="right:1185.15px;top:471.00px;font-size:14px;color:#1a1a1a;font-weight:normal;font-family:'Liberation Sans', sans-serif;transform:scaleX(0.93);transform-origin:right top;">4</div>
<div class="t" style="left:99.85px;top:471.00px;font-size:14px;color:#1a1a1a;font-weight:normal;font-family:'Liberation Sans', sans-serif;transform:scaleX(0.9);transform-origin:left top;">0280-XJGEX</div>
<div class="t" style="right:971.90px;top:471.00px;font-size:14px;color:#1a1a1a;font-weight:normal;font-family:'Liberation Sans', sans-serif;transform:scaleX(0.93);transform-origin:right top;">1</div>
<div class="t" style="left:313.10px;top:471.00px;font-size:14px;color:#1a1a1a;font-weight:normal;font-family:'Liberation Sans', sans-serif;transform:scaleX(0.964);transform-origin:left top;">United States</div>
<div class="t" style="left:420.10px;top:471.00px;font-size:14px;color:#1a1a1a;font-weight:normal;font-family:'Liberation Sans', sans-serif;transform:scaleX(0.968);transform-origin:left top;">California</div>
<div class="t" style="left:526.35px;top:471.00px;font-size:14px;color:#1a1a1a;font-weight:normal;font-family:'Liberation Sans', sans-serif;transform:scaleX(0.917);transform-origin:left top;">Los Angeles</div>
<div class="t" style="left:29.85px;top:489.00px;font-size:14px;color:#1a1a1a;font-weight:normal;font-family:'Liberation Sans', sans-serif;transform:scaleX(0.93);transform-origin:left top;">...</div>
<div class="t" style="left:99.85px;top:489.00px;font-size:14px;color:#1a1a1a;font-weight:normal;font-family:'Liberation Sans', sans-serif;transform:scaleX(0.93);transform-origin:left top;">...</div>
<div class="t" style="left:206.35px;top:489.00px;font-size:14px;color:#1a1a1a;font-weight:normal;font-family:'Liberation Sans', sans-serif;transform:scaleX(0.93);transform-origin:left top;">...</div>
<div class="t" style="left:313.10px;top:489.00px;font-size:14px;color:#1a1a1a;font-weight:normal;font-family:'Liberation Sans', sans-serif;transform:scaleX(0.93);transform-origin:left top;">...</div>
<div class="t" style="left:420.10px;top:489.00px;font-size:14px;color:#1a1a1a;font-weight:normal;font-family:'Liberation Sans', sans-serif;transform:scaleX(0.93);transform-origin:left top;">...</div>
<div class="t" style="left:526.35px;top:489.00px;font-size:14px;color:#1a1a1a;font-weight:normal;font-family:'Liberation Sans', sans-serif;transform:scaleX(0.93);transform-origin:left top;">...</div>
<div class="t" style="right:1185.15px;top:510.00px;font-size:14px;color:#1a1a1a;font-weight:normal;font-family:'Liberation Sans', sans-serif;transform:scaleX(0.93);transform-origin:right top;">7038</div>
<div class="t" style="left:99.85px;top:510.00px;font-size:14px;color:#1a1a1a;font-weight:normal;font-family:'Liberation Sans', sans-serif;transform:scaleX(0.9);transform-origin:left top;">2569-WGERO</div>
<div class="t" style="right:971.90px;top:510.00px;font-size:14px;color:#1a1a1a;font-weight:normal;font-family:'Liberation Sans', sans-serif;transform:scaleX(0.93);transform-origin:right top;">1</div>
<div class="t" style="left:313.10px;top:510.00px;font-size:14px;color:#1a1a1a;font-weight:normal;font-family:'Liberation Sans', sans-serif;transform:scaleX(0.964);transform-origin:left top;">United States</div>
<div class="t" style="left:420.10px;top:510.00px;font-size:14px;color:#1a1a1a;font-weight:normal;font-family:'Liberation Sans', sans-serif;transform:scaleX(0.968);transform-origin:left top;">California</div>
<div class="t" style="left:526.35px;top:510.00px;font-size:14px;color:#1a1a1a;font-weight:normal;font-family:'Liberation Sans', sans-serif;transform:scaleX(0.93);transform-origin:left top;">Landers</div>
<div class="t" style="right:1185.15px;top:530.00px;font-size:14px;color:#1a1a1a;font-weight:normal;font-family:'Liberation Sans', sans-serif;transform:scaleX(0.93);transform-origin:right top;">7039</div>
<div class="t" style="left:99.85px;top:530.00px;font-size:14px;color:#1a1a1a;font-weight:normal;font-family:'Liberation Sans', sans-serif;transform:scaleX(0.9);transform-origin:left top;">6840-RESVB</div>
<div class="t" style="right:971.90px;top:530.00px;font-size:14px;color:#1a1a1a;font-weight:normal;font-family:'Liberation Sans', sans-serif;transform:scaleX(0.93);transform-origin:right top;">1</div>
<div class="t" style="left:313.10px;top:530.00px;font-size:14px;color:#1a1a1a;font-weight:normal;font-family:'Liberation Sans', sans-serif;transform:scaleX(0.964);transform-origin:left top;">United States</div>
<div class="t" style="left:420.10px;top:530.00px;font-size:14px;color:#1a1a1a;font-weight:normal;font-family:'Liberation Sans', sans-serif;transform:scaleX(0.968);transform-origin:left top;">California</div>
<div class="t" style="left:526.35px;top:530.00px;font-size:14px;color:#1a1a1a;font-weight:normal;font-family:'Liberation Sans', sans-serif;transform:scaleX(0.93);transform-origin:left top;">Adelanto</div>
<div class="t" style="right:1185.15px;top:549.00px;font-size:14px;color:#1a1a1a;font-weight:normal;font-family:'Liberation Sans', sans-serif;transform:scaleX(0.93);transform-origin:right top;">7040</div>
<div class="t" style="left:99.85px;top:549.00px;font-size:14px;color:#1a1a1a;font-weight:normal;font-family:'Liberation Sans', sans-serif;transform:scaleX(0.9);transform-origin:left top;">2234-XADUH</div>
<div class="t" style="right:971.90px;top:549.00px;font-size:14px;color:#1a1a1a;font-weight:normal;font-family:'Liberation Sans', sans-serif;transform:scaleX(0.93);transform-origin:right top;">1</div>
<div class="t" style="left:313.10px;top:549.00px;font-size:14px;color:#1a1a1a;font-weight:normal;font-family:'Liberation Sans', sans-serif;transform:scaleX(0.964);transform-origin:left top;">United States</div>
<div class="t" style="left:420.10px;top:549.00px;font-size:14px;color:#1a1a1a;font-weight:normal;font-family:'Liberation Sans', sans-serif;transform:scaleX(0.968);transform-origin:left top;">California</div>
<div class="t" style="left:526.35px;top:549.00px;font-size:14px;color:#1a1a1a;font-weight:normal;font-family:'Liberation Sans', sans-serif;transform:scaleX(0.93);transform-origin:left top;">Amboy</div>
<div class="t" style="right:1185.15px;top:569.00px;font-size:14px;color:#1a1a1a;font-weight:normal;font-family:'Liberation Sans', sans-serif;transform:scaleX(0.93);transform-origin:right top;">7041</div>
<div class="t" style="left:99.85px;top:569.00px;font-size:14px;color:#1a1a1a;font-weight:normal;font-family:'Liberation Sans', sans-serif;transform:scaleX(0.9);transform-origin:left top;">4801-JZAZL</div>
<div class="t" style="right:971.90px;top:569.00px;font-size:14px;color:#1a1a1a;font-weight:normal;font-family:'Liberation Sans', sans-serif;transform:scaleX(0.93);transform-origin:right top;">1</div>
<div class="t" style="left:313.10px;top:569.00px;font-size:14px;color:#1a1a1a;font-weight:normal;font-family:'Liberation Sans', sans-serif;transform:scaleX(0.964);transform-origin:left top;">United States</div>
<div class="t" style="left:420.10px;top:569.00px;font-size:14px;color:#1a1a1a;font-weight:normal;font-family:'Liberation Sans', sans-serif;transform:scaleX(0.968);transform-origin:left top;">California</div>
<div class="t" style="left:526.35px;top:569.00px;font-size:14px;color:#1a1a1a;font-weight:normal;font-family:'Liberation Sans', sans-serif;transform:scaleX(0.923);transform-origin:left top;">Angelus Oaks</div>
<div class="t" style="right:1185.15px;top:588.00px;font-size:14px;color:#1a1a1a;font-weight:normal;font-family:'Liberation Sans', sans-serif;transform:scaleX(0.93);transform-origin:right top;">7042</div>
<div class="t" style="left:99.85px;top:588.00px;font-size:14px;color:#1a1a1a;font-weight:normal;font-family:'Liberation Sans', sans-serif;transform:scaleX(0.9);transform-origin:left top;">3186-AJIEK</div>
<div class="t" style="right:971.90px;top:588.00px;font-size:14px;color:#1a1a1a;font-weight:normal;font-family:'Liberation Sans', sans-serif;transform:scaleX(0.93);transform-origin:right top;">1</div>
<div class="t" style="left:313.10px;top:588.00px;font-size:14px;color:#1a1a1a;font-weight:normal;font-family:'Liberation Sans', sans-serif;transform:scaleX(0.964);transform-origin:left top;">United States</div>
<div class="t" style="left:420.10px;top:588.00px;font-size:14px;color:#1a1a1a;font-weight:normal;font-family:'Liberation Sans', sans-serif;transform:scaleX(0.968);transform-origin:left top;">California</div>
<div class="t" style="left:526.35px;top:588.00px;font-size:14px;color:#1a1a1a;font-weight:normal;font-family:'Liberation Sans', sans-serif;transform:scaleX(0.93);transform-origin:left top;">Apple Valley</div>
<div class="r" style="left:26.2px;top:308.1px;width:72.4px;height:22px;border:2px solid #217346"></div>
<div class="r" style="left:94.20px;top:326.40px;width:4.70px;height:4.60px;background:#217346;"></div>
<div class="r" style="left:612.00px;top:5.50px;width:19.00px;height:714.50px;background:#f1ebe9;"></div>
<div class="r" style="left:613.2px;top:5.5px;width:17.6px;height:720px;background:#f5f5f4;border-radius:9px 9px 0 0"></div>
<svg class="r" style="left:616px;top:9px" width="12" height="10"><path d="M6 2 L9.9 7.6 Q10.1 8 9.6 8 H2.4 Q1.9 8 2.1 7.6 Z" fill="#6b6b6b" stroke="#6b6b6b" stroke-width="1.2" stroke-linejoin="round"/></svg>
<div class="r" style="left:617.8px;top:488.3px;width:8.7px;height:240px;background:#6e6e6e;border-radius:4.3px"></div>
<div class="r" style="left:631.00px;top:5.50px;width:2.00px;height:714.50px;background:#ebe5e3;"></div>
<div class="r" style="left:633.00px;top:5.50px;width:647.00px;height:714.50px;background:#f2f2f2;"></div>
<div class="r" style="left:642.00px;top:17.00px;width:627.50px;height:703.00px;background:#ebeae9;"></div>
<div class="t" style="left:674.00px;top:48.00px;font-size:14.3px;color:#333;font-weight:normal;font-family:'Liberation Sans', sans-serif;">customers.</div>
<div class="r" style="left:642.00px;top:17.00px;width:616.50px;height:40.40px;background:#ebeae9;"></div>
<div class="r" style="left:651.00px;top:32.80px;width:16.00px;height:1.20px;background:#666;"></div>
<div class="r" style="left:651.00px;top:37.80px;width:16.00px;height:1.20px;background:#666;"></div>
<div class="r" style="left:651.00px;top:42.80px;width:16.00px;height:1.20px;background:#666;"></div>
<div class="t" style="left:680.00px;top:33.00px;font-size:16.6px;color:#242424;font-weight:normal;font-family:'Liberation Sans', sans-serif;-webkit-text-stroke:0.5px #242424;letter-spacing:0.1px">Copilot</div>
<div class="r" style="left:1171px;top:23px;width:32.6px;height:32.6px;background:#f5f5f5;border-radius:5px"></div>
<svg class="r" style="left:1177px;top:29px" width="20" height="20" viewBox="0 0 20 20"><path d="M10 2 A8 8 0 1 1 5.6 16.7 L2.2 17.4 L3.0 14.2 A8 8 0 0 1 10 2 Z" fill="none" stroke="#4a4a4a" stroke-width="1.15" stroke-linejoin="round"/><path d="M10 6.2 V13.6 M6.3 9.9 H13.7" stroke="#4a4a4a" stroke-width="1.2"/></svg>
<svg class="r" style="left:1216px;top:29px" width="16" height="14"><path d="M2.2 3.4 L8 9.2 L13.8 3.4" fill="none" stroke="#4a4a4a" stroke-width="1.15"/></svg>
<svg class="r" style="left:1249px;top:27px" width="16" height="16"><path d="M2 2 L14 14 M14 2 L2 14" fill="none" stroke="#4a4a4a" stroke-width="1.15"/></svg>
<div class="r" style="left:1258.4px;top:58.9px;width:11.6px;height:631px;background:#f2f2f2;border-radius:5.5px 0 0 5.5px"></div>
<div class="r" style="left:1260px;top:551px;width:7.2px;height:70px;background:#666;border-radius:3.6px"></div>
<svg class="r" style="left:676px;top:80.00px" width="46" height="20" viewBox="0 0 46 20"><path d="M11.5 3.2 C12.4 3.2 12.8 4 12.7 5.2 L12.5 8.3 L14.6 8.6 C15.6 8.8 16 9.7 15.7 10.8 L14.5 15.6 C14.2 16.8 13.2 17.4 12 17.1 L6 15.6 C4.5 15.2 3.9 13.6 4.3 12.2 C4.7 11 5.8 10.4 7 9.6 C8.2 8.8 9.2 7.4 9.9 5.2 C10.3 4 10.7 3.2 11.5 3.2 Z M30.2 5.8 C32 4.8 35 4.2 37.6 4.1 C39.2 4.1 40.2 5.2 40.4 6.8 L40.6 9.6 C40.7 10.8 39.9 11.6 38.8 11.7 L37.4 11.9 L36.9 15.8 C36.7 17.4 35.2 17.6 34.6 16.2 C33.6 13.8 32.6 11.8 30.8 10.4 C29.2 9.2 28.9 6.6 30.2 5.8 Z" fill="none" stroke="#454545" stroke-width="1.1" stroke-linejoin="round"/></svg>
<div class="r" style="left:690px;top:121.25px;width:520px;height:79.25px;background:#c9e9d6;border-radius:8px"></div>
<div class="t" style="left:708.00px;top:134.00px;font-size:14.25px;color:#424242;font-weight:normal;font-family:'Liberation Sans', sans-serif;">&quot;Using K-nearest neighbors, predict churn using tenure, MonthlyCharges,</div>
<div class="t" style="left:708.00px;top:155.00px;font-size:14.25px;color:#424242;font-weight:normal;font-family:'Liberation Sans', sans-serif;">and TotalCharges as inputs. Store the predictions in a new column called</div>
<div class="t" style="left:708.00px;top:175.00px;font-size:14.25px;color:#424242;font-weight:normal;font-family:'Liberation Sans', sans-serif;">Churn_Prediction.&quot;</div>
<div class="r" style="left:673.8px;top:219.50px;width:20px;height:19px"><svg width="20" height="19" viewBox="0 0 20 19"><defs>
<linearGradient id="lg1" x1="0" y1="0" x2="0" y2="1"><stop offset="0" stop-color="#18a0ec"/><stop offset="0.42" stop-color="#1e9bd0"/><stop offset="0.5" stop-color="#32a080"/><stop offset="0.7" stop-color="#44a060"/><stop offset="0.78" stop-color="#c6ce2a"/><stop offset="1" stop-color="#c8d02a"/></linearGradient>
<linearGradient id="lg2" x1="0" y1="0" x2="0" y2="1"><stop offset="0" stop-color="#a45ad8"/><stop offset="0.3" stop-color="#c058c0"/><stop offset="0.45" stop-color="#e4559a"/><stop offset="0.7" stop-color="#f0605a"/><stop offset="1" stop-color="#f0905a"/></linearGradient>
</defs>
<path d="M4.6 1.3 H12.6 Q14.4 1.3 14.9 3 L15.4 5.2 L11.6 5.5 L8.6 14.4 H2.2 Q0.6 14.4 0.9 12.6 L2.6 3.4 Q3 1.3 4.6 1.3 Z" fill="url(#lg1)"/>
<path d="M10.6 1.3 H12.6 Q14.4 1.3 14.9 3 L15.4 5.6 H10.2 Z" fill="#2058d8"/>
<path d="M11.2 5.8 H17.4 Q19.3 5.8 18.9 7.8 L17.3 16.4 Q16.9 18.2 15.2 18.2 H7.2 Q5.6 18.2 5.2 16.6 L4.8 14.2 H8.4 Z" fill="url(#lg2)"/>
<path d="M11.6 5.6 L8.5 14.6" stroke="#f4f2f0" stroke-width="1.4"/>
</svg></div>
<div class="t" style="left:703.00px;top:223.00px;font-size:14.6px;color:#2a2a2a;font-weight:normal;font-family:'Liberation Sans', sans-serif;-webkit-text-stroke:0.45px #2a2a2a;letter-spacing:0.1px">Copilot</div>
<div class="t" style="left:762.00px;top:228.00px;font-size:10.4px;color:#616161;font-weight:normal;font-family:'Liberation Sans', sans-serif;">AI-generated content may be incorrect</div>
<div class="t" style="left:674.00px;top:257.00px;font-size:14.37px;color:#424242;font-weight:normal;font-family:'Liberation Sans', sans-serif;">To predict churn using K-nearest neighbors, the features &#x27;Tenure Months&#x27;, &#x27;Monthly</div>
<div class="t" style="left:674.00px;top:278.00px;font-size:14.37px;color:#424242;font-weight:normal;font-family:'Liberation Sans', sans-serif;">Charges&#x27;, and &#x27;Total Charges Numeric&#x27; will be used as inputs. Any rows with missing</div>
<div class="t" style="left:674.00px;top:298.00px;font-size:14.37px;color:#424242;font-weight:normal;font-family:'Liberation Sans', sans-serif;">values in these columns will be removed to ensure the model works correctly. The</div>
<div class="t" style="left:674.00px;top:319.00px;font-size:14.37px;color:#424242;font-weight:normal;font-family:'Liberation Sans', sans-serif;">KNN classifier will be trained on the available data, and predictions will be stored in a</div>
<div class="t" style="left:674.00px;top:339.00px;font-size:14.37px;color:#424242;font-weight:normal;font-family:'Liberation Sans', sans-serif;">new column called &#x27;Churn_Prediction&#x27;. The number of neighbors (k) will be set to 5 by</div>
<div class="t" style="left:674.00px;top:360.00px;font-size:14.37px;color:#424242;font-weight:normal;font-family:'Liberation Sans', sans-serif;">default.</div>
<svg class="r" style="left:676px;top:391.80px" width="46" height="20" viewBox="0 0 46 20"><path d="M11.5 3.2 C12.4 3.2 12.8 4 12.7 5.2 L12.5 8.3 L14.6 8.6 C15.6 8.8 16 9.7 15.7 10.8 L14.5 15.6 C14.2 16.8 13.2 17.4 12 17.1 L6 15.6 C4.5 15.2 3.9 13.6 4.3 12.2 C4.7 11 5.8 10.4 7 9.6 C8.2 8.8 9.2 7.4 9.9 5.2 C10.3 4 10.7 3.2 11.5 3.2 Z M30.2 5.8 C32 4.8 35 4.2 37.6 4.1 C39.2 4.1 40.2 5.2 40.4 6.8 L40.6 9.6 C40.7 10.8 39.9 11.6 38.8 11.7 L37.4 11.9 L36.9 15.8 C36.7 17.4 35.2 17.6 34.6 16.2 C33.6 13.8 32.6 11.8 30.8 10.4 C29.2 9.2 28.9 6.6 30.2 5.8 Z" fill="none" stroke="#454545" stroke-width="1.1" stroke-linejoin="round"/></svg>
<div class="r" style="left:673.8px;top:424.50px;width:20px;height:19px"><svg width="20" height="19" viewBox="0 0 20 19"><defs>
<linearGradient id="lg1" x1="0" y1="0" x2="0" y2="1"><stop offset="0" stop-color="#18a0ec"/><stop offset="0.42" stop-color="#1e9bd0"/><stop offset="0.5" stop-color="#32a080"/><stop offset="0.7" stop-color="#44a060"/><stop offset="0.78" stop-color="#c6ce2a"/><stop offset="1" stop-color="#c8d02a"/></linearGradient>
<linearGradient id="lg2" x1="0" y1="0" x2="0" y2="1"><stop offset="0" stop-color="#a45ad8"/><stop offset="0.3" stop-color="#c058c0"/><stop offset="0.45" stop-color="#e4559a"/><stop offset="0.7" stop-color="#f0605a"/><stop offset="1" stop-color="#f0905a"/></linearGradient>
</defs>
<path d="M4.6 1.3 H12.6 Q14.4 1.3 14.9 3 L15.4 5.2 L11.6 5.5 L8.6 14.4 H2.2 Q0.6 14.4 0.9 12.6 L2.6 3.4 Q3 1.3 4.6 1.3 Z" fill="url(#lg1)"/>
<path d="M10.6 1.3 H12.6 Q14.4 1.3 14.9 3 L15.4 5.6 H10.2 Z" fill="#2058d8"/>
<path d="M11.2 5.8 H17.4 Q19.3 5.8 18.9 7.8 L17.3 16.4 Q16.9 18.2 15.2 18.2 H7.2 Q5.6 18.2 5.2 16.6 L4.8 14.2 H8.4 Z" fill="url(#lg2)"/>
<path d="M11.6 5.6 L8.5 14.6" stroke="#f4f2f0" stroke-width="1.4"/>
</svg></div>
<div class="t" style="left:703.00px;top:428.00px;font-size:14.6px;color:#2a2a2a;font-weight:normal;font-family:'Liberation Sans', sans-serif;-webkit-text-stroke:0.45px #2a2a2a;letter-spacing:0.1px">Copilot</div>
<div class="t" style="left:762.00px;top:434.00px;font-size:10.4px;color:#616161;font-weight:normal;font-family:'Liberation Sans', sans-serif;">AI-generated content may be incorrect</div>
<div class="t" style="left:674.40px;top:457.00px;font-size:14.1px;color:#424242;font-weight:normal;font-family:'Liberation Sans', sans-serif;">Here&#39;s what I inserted in <span style="color:#1b7f4b;text-decoration:underline;text-underline-offset:1.5px">A78</span>:</div>
<svg class="r" style="left:673.5px;top:495px" width="18" height="16" viewBox="0 0 18 16"><path d="M3.8 0.9 H1.2 V15.1 H3.8 M13.2 0.9 H15.8 V15.1 H13.2" fill="none" stroke="#3a3a3a" stroke-width="1.3"/><path d="M4.6 11 V5.9 H6 Q7.5 5.9 7.5 7.3 Q7.5 8.7 6 8.7 H4.6 M9.1 5.7 L10.9 8.3 L12.7 5.7 M10.9 8.3 V11" fill="none" stroke="#3a3a3a" stroke-width="1.25"/></svg>
<div class="t" style="left:703.60px;top:498.00px;font-size:12.2px;color:#707070;font-weight:normal;font-family:'Liberation Sans', sans-serif;letter-spacing:-0.35px">Show analysis</div>
<svg class="r" style="left:790px;top:498px" width="12" height="10"><path d="M1.8 2.3 L6 6.5 L10.2 2.3" fill="none" stroke="#555" stroke-width="1.1"/></svg>
<div class="t" style="left:674.40px;top:528.00px;font-size:12.2px;color:#333;font-weight:normal;font-family:'Liberation Sans', sans-serif;">7043 rows × 35 columns</div>
<div class="r" style="left:674px;top:544.5px;width:552.6px;height:24.70px;background:#f5f5f4"></div>
<div class="r" style="left:674.00px;top:544.00px;width:552.60px;height:1.00px;background:#8c8c8c;"></div>
<div class="r" style="left:674.00px;top:569.00px;width:552.60px;height:1.00px;background:#8c8c8c;"></div>
<div class="r" style="left:674.00px;top:595.00px;width:552.60px;height:1.00px;background:#8c8c8c;"></div>
<div class="r" style="left:674.00px;top:620.00px;width:552.60px;height:1.00px;background:#8c8c8c;"></div>
<div class="r" style="left:674.00px;top:646.00px;width:552.60px;height:1.00px;background:#8c8c8c;"></div>
<div class="r" style="left:674.00px;top:672.00px;width:552.60px;height:1.00px;background:#8c8c8c;"></div>
<div class="r" style="left:717.00px;top:543.50px;width:1.00px;height:148.50px;background:#8c8c8c;"></div>
<div class="r" style="left:821.00px;top:543.50px;width:1.00px;height:148.50px;background:#8c8c8c;"></div>
<div class="r" style="left:861.00px;top:543.50px;width:1.00px;height:148.50px;background:#8c8c8c;"></div>
<div class="r" style="left:957.00px;top:543.50px;width:1.00px;height:148.50px;background:#8c8c8c;"></div>
<div class="r" style="left:998.00px;top:543.50px;width:1.00px;height:148.50px;background:#8c8c8c;"></div>
<div class="r" style="left:674px;top:544px;width:552.6px;height:150px;overflow:hidden">
</div>
<div class="t" style="left:722.90px;top:551.00px;font-size:13.1px;color:#3a3a3a;font-weight:bold;font-family:'Liberation Mono', monospace;">City</div>
<div class="t" style="left:826.70px;top:552.00px;font-size:13.1px;color:#333;font-weight:normal;font-family:'Liberation Mono', monospace;">…</div>
<div class="t" style="left:866.90px;top:551.00px;font-size:13.1px;color:#3a3a3a;font-weight:bold;font-family:'Liberation Mono', monospace;">Churn Score</div>
<div class="t" style="left:963.20px;top:551.00px;font-size:13.1px;color:#3a3a3a;font-weight:bold;font-family:'Liberation Mono', monospace;">CLTV</div>
<div class="t" style="left:1003.80px;top:551.00px;font-size:13.1px;color:#3a3a3a;font-weight:bold;font-family:'Liberation Mono', monospace;">Churn Reason</div>
<div class="t" style="left:674.30px;top:577.00px;font-size:13.1px;color:#3b3b3b;font-weight:normal;font-family:'Liberation Mono', monospace;">ornia</div>
<div class="t" style="left:722.90px;top:577.00px;font-size:13.1px;color:#3b3b3b;font-weight:normal;font-family:'Liberation Mono', monospace;">Los Angeles</div>
<div class="t" style="left:826.70px;top:577.00px;font-size:13.1px;color:#333;font-weight:normal;font-family:'Liberation Mono', monospace;">…</div>
<div class="t" style="left:866.90px;top:577.00px;font-size:13.1px;color:#138048;font-weight:normal;font-family:'Liberation Mono', monospace;">86</div>
<div class="t" style="left:963.20px;top:577.00px;font-size:13.1px;color:#138048;font-weight:normal;font-family:'Liberation Mono', monospace;">3239</div>
<div class="r" style="left:1003.80px;top:569.20px;width:222.80px;height:26px;overflow:hidden">
<div class="t" style="left:0.00px;top:7.00px;font-size:13.1px;color:#3b3b3b;font-weight:normal;font-family:'Liberation Mono', monospace;">Competitor made better offer</div>
</div>
<div class="t" style="left:674.30px;top:602.00px;font-size:13.1px;color:#3b3b3b;font-weight:normal;font-family:'Liberation Mono', monospace;">ornia</div>
<div class="t" style="left:722.90px;top:602.00px;font-size:13.1px;color:#3b3b3b;font-weight:normal;font-family:'Liberation Mono', monospace;">Los Angeles</div>
<div class="t" style="left:826.70px;top:603.00px;font-size:13.1px;color:#333;font-weight:normal;font-family:'Liberation Mono', monospace;">…</div>
<div class="t" style="left:866.90px;top:602.00px;font-size:13.1px;color:#138048;font-weight:normal;font-family:'Liberation Mono', monospace;">67</div>
<div class="t" style="left:963.20px;top:602.00px;font-size:13.1px;color:#138048;font-weight:normal;font-family:'Liberation Mono', monospace;">2701</div>
<div class="r" style="left:1003.80px;top:595.00px;width:222.80px;height:26px;overflow:hidden">
<div class="t" style="left:0.00px;top:7.00px;font-size:13.1px;color:#3b3b3b;font-weight:normal;font-family:'Liberation Mono', monospace;">Moved</div>
</div>
<div class="t" style="left:674.30px;top:628.00px;font-size:13.1px;color:#3b3b3b;font-weight:normal;font-family:'Liberation Mono', monospace;">ornia</div>
<div class="t" style="left:722.90px;top:628.00px;font-size:13.1px;color:#3b3b3b;font-weight:normal;font-family:'Liberation Mono', monospace;">Los Angeles</div>
<div class="t" style="left:826.70px;top:628.00px;font-size:13.1px;color:#333;font-weight:normal;font-family:'Liberation Mono', monospace;">…</div>
<div class="t" style="left:866.90px;top:628.00px;font-size:13.1px;color:#138048;font-weight:normal;font-family:'Liberation Mono', monospace;">86</div>
<div class="t" style="left:963.20px;top:628.00px;font-size:13.1px;color:#138048;font-weight:normal;font-family:'Liberation Mono', monospace;">3372</div>
<div class="r" style="left:1003.80px;top:620.60px;width:222.80px;height:26px;overflow:hidden">
<div class="t" style="left:0.00px;top:7.00px;font-size:13.1px;color:#3b3b3b;font-weight:normal;font-family:'Liberation Mono', monospace;">Moved</div>
</div>
<div class="t" style="left:674.30px;top:654.00px;font-size:13.1px;color:#3b3b3b;font-weight:normal;font-family:'Liberation Mono', monospace;">ornia</div>
<div class="t" style="left:722.90px;top:654.00px;font-size:13.1px;color:#3b3b3b;font-weight:normal;font-family:'Liberation Mono', monospace;">Los Angeles</div>
<div class="t" style="left:826.70px;top:654.00px;font-size:13.1px;color:#333;font-weight:normal;font-family:'Liberation Mono', monospace;">…</div>
<div class="t" style="left:866.90px;top:654.00px;font-size:13.1px;color:#138048;font-weight:normal;font-family:'Liberation Mono', monospace;">84</div>
<div class="t" style="left:963.20px;top:654.00px;font-size:13.1px;color:#138048;font-weight:normal;font-family:'Liberation Mono', monospace;">5003</div>
<div class="r" style="left:1003.80px;top:646.30px;width:222.80px;height:26px;overflow:hidden">
<div class="t" style="left:0.00px;top:7.00px;font-size:13.1px;color:#3b3b3b;font-weight:normal;font-family:'Liberation Mono', monospace;">Moved</div>
</div>
<div class="t" style="left:674.30px;top:679.00px;font-size:13.1px;color:#3b3b3b;font-weight:normal;font-family:'Liberation Mono', monospace;">ornia</div>
<div class="t" style="left:722.90px;top:679.00px;font-size:13.1px;color:#3b3b3b;font-weight:normal;font-family:'Liberation Mono', monospace;">Los Angeles</div>
<div class="t" style="left:826.70px;top:680.00px;font-size:13.1px;color:#333;font-weight:normal;font-family:'Liberation Mono', monospace;">…</div>
<div class="t" style="left:866.90px;top:679.00px;font-size:13.1px;color:#138048;font-weight:normal;font-family:'Liberation Mono', monospace;">89</div>
<div class="t" style="left:963.20px;top:679.00px;font-size:13.1px;color:#138048;font-weight:normal;font-family:'Liberation Mono', monospace;">5340</div>
<div class="r" style="left:1003.80px;top:672.00px;width:222.80px;height:26px;overflow:hidden">
<div class="t" style="left:0.00px;top:7.00px;font-size:13.1px;color:#3b3b3b;font-weight:normal;font-family:'Liberation Mono', monospace;">Competitor had better devices</div>
</div>
<div class="r" style="left:937.6px;top:623.8px;width:36.4px;height:36.4px;border-radius:50%;background:#faf8f3"></div>
<svg class="r" style="left:945px;top:631px" width="22" height="22"><path d="M11 3.5 V18 M4.8 11.8 L11 18 L17.2 11.8" fill="none" stroke="#1b7f4b" stroke-width="1.6"/></svg>
<div class="r" style="left:674.5px;top:691.6px;width:563px;height:60px;background:#fefefe;border-radius:13px;box-shadow:0 0 0 1px #e2e2e2"></div>
<div class="t" style="left:691.50px;top:712.00px;font-size:14px;color:#6f6f6f;font-weight:normal;font-family:'Liberation Sans', sans-serif;">Message Copilot</div>
<svg class="r" style="left:1164px;top:709px" width="20" height="12"><g fill="none" stroke="#444" stroke-width="1.15"><path d="M9.6 2.2 V12 M9.6 2.6 C8.8 1.5 6.6 1.5 6 3 C4 2.8 2.4 4.6 3.2 6.6 C1.8 7.4 1.6 9.6 2.6 11.2 M9.6 2.6 C10.4 1.5 12.8 1.5 13.4 3 C15.6 3 16.6 4.8 16 6.4 C17.4 7.2 17.6 9.6 16.6 11.2"/><circle cx="6.6" cy="6" r="1.1"/><circle cx="12.6" cy="9.2" r="1"/></g></svg>
<svg class="r" style="left:1198px;top:709px" width="16" height="12"><path d="M5.3 12 V5.2 A3.5 3.5 0 0 1 12.3 5.2 V12 M2.3 9.6 V12 M15.2 9.6 V12" fill="none" stroke="#444" stroke-width="1.2"/></svg>
</body></html>
